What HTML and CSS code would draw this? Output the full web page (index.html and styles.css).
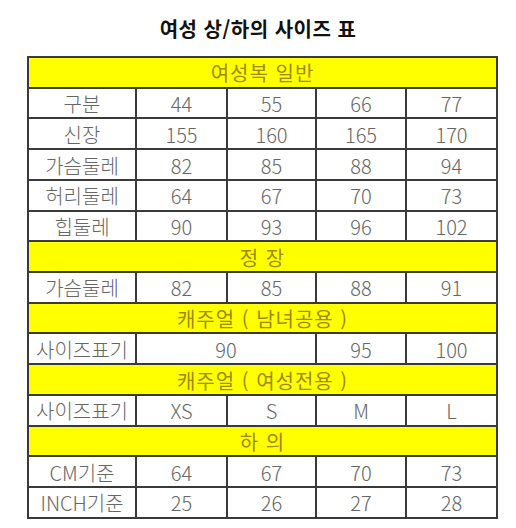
FILE: index.html
```html
<!DOCTYPE html>
<html lang="ko">
<head>
<meta charset="utf-8">
<link rel="stylesheet" href="styles.css">
</head>
<body>
<h1 class="title">여성 상/하의 사이즈 표</h1>
<table class="size-table">
  <colgroup>
    <col class="c1"><col class="c2"><col class="c3"><col class="c4"><col class="c5">
  </colgroup>
  <tr class="head"><td colspan="5">여성복 일반</td></tr>
  <tr><td>구분</td><td>44</td><td>55</td><td>66</td><td>77</td></tr>
  <tr><td>신장</td><td>155</td><td>160</td><td>165</td><td>170</td></tr>
  <tr><td>가슴둘레</td><td>82</td><td>85</td><td>88</td><td>94</td></tr>
  <tr><td>허리둘레</td><td>64</td><td>67</td><td>70</td><td>73</td></tr>
  <tr><td>힙둘레</td><td>90</td><td>93</td><td>96</td><td>102</td></tr>
  <tr class="head"><td colspan="5">정 장</td></tr>
  <tr><td>가슴둘레</td><td>82</td><td>85</td><td>88</td><td>91</td></tr>
  <tr class="head"><td colspan="5">캐주얼 ( 남녀공용 )</td></tr>
  <tr><td>사이즈표기</td><td colspan="2">90</td><td>95</td><td>100</td></tr>
  <tr class="head"><td colspan="5">캐주얼 ( 여성전용 )</td></tr>
  <tr><td>사이즈표기</td><td>XS</td><td>S</td><td>M</td><td>L</td></tr>
  <tr class="head"><td colspan="5">하 의</td></tr>
  <tr><td>CM기준</td><td>64</td><td>67</td><td>70</td><td>73</td></tr>
  <tr><td>INCH기준</td><td>25</td><td>26</td><td>27</td><td>28</td></tr>
</table>
</body>
</html>
```
FILE: styles.css
```css
html, body {
  margin: 0;
  padding: 0;
  background: #ffffff;
}
body {
  width: 516px;
  font-family: "Noto Sans CJK KR", "Noto Sans", sans-serif;
}
.title {
  margin: 0;
  padding-top: 17px;
  height: 56px;
  box-sizing: border-box;
  text-align: center;
  font-size: 20px;
  font-weight: 700;
  line-height: 24px;
  color: #111;
  letter-spacing: 0.5px;
}
.size-table {
  margin-left: 27px;
  width: 469px;
  border-collapse: collapse;
  table-layout: fixed;
}
.c1 { width: 108px; }
.c2 { width: 91px; }
.c3 { width: 89px; }
.c4 { width: 90px; }
.c5 { width: 91px; }
.size-table tr { height: 30.73px; }
.size-table td {
  border: 2px solid #3a3a3a;
  padding: 2px 0 0;
  text-align: center;
  vertical-align: middle;
  font-size: 20px;
  line-height: 24px;
  font-weight: 300;
  color: #666666;
  white-space: nowrap;
  overflow: hidden;
}
.size-table .head td {
  background: #ffff00;
  color: #a08a00;
  font-weight: 400;
  letter-spacing: 1px;
}
```
